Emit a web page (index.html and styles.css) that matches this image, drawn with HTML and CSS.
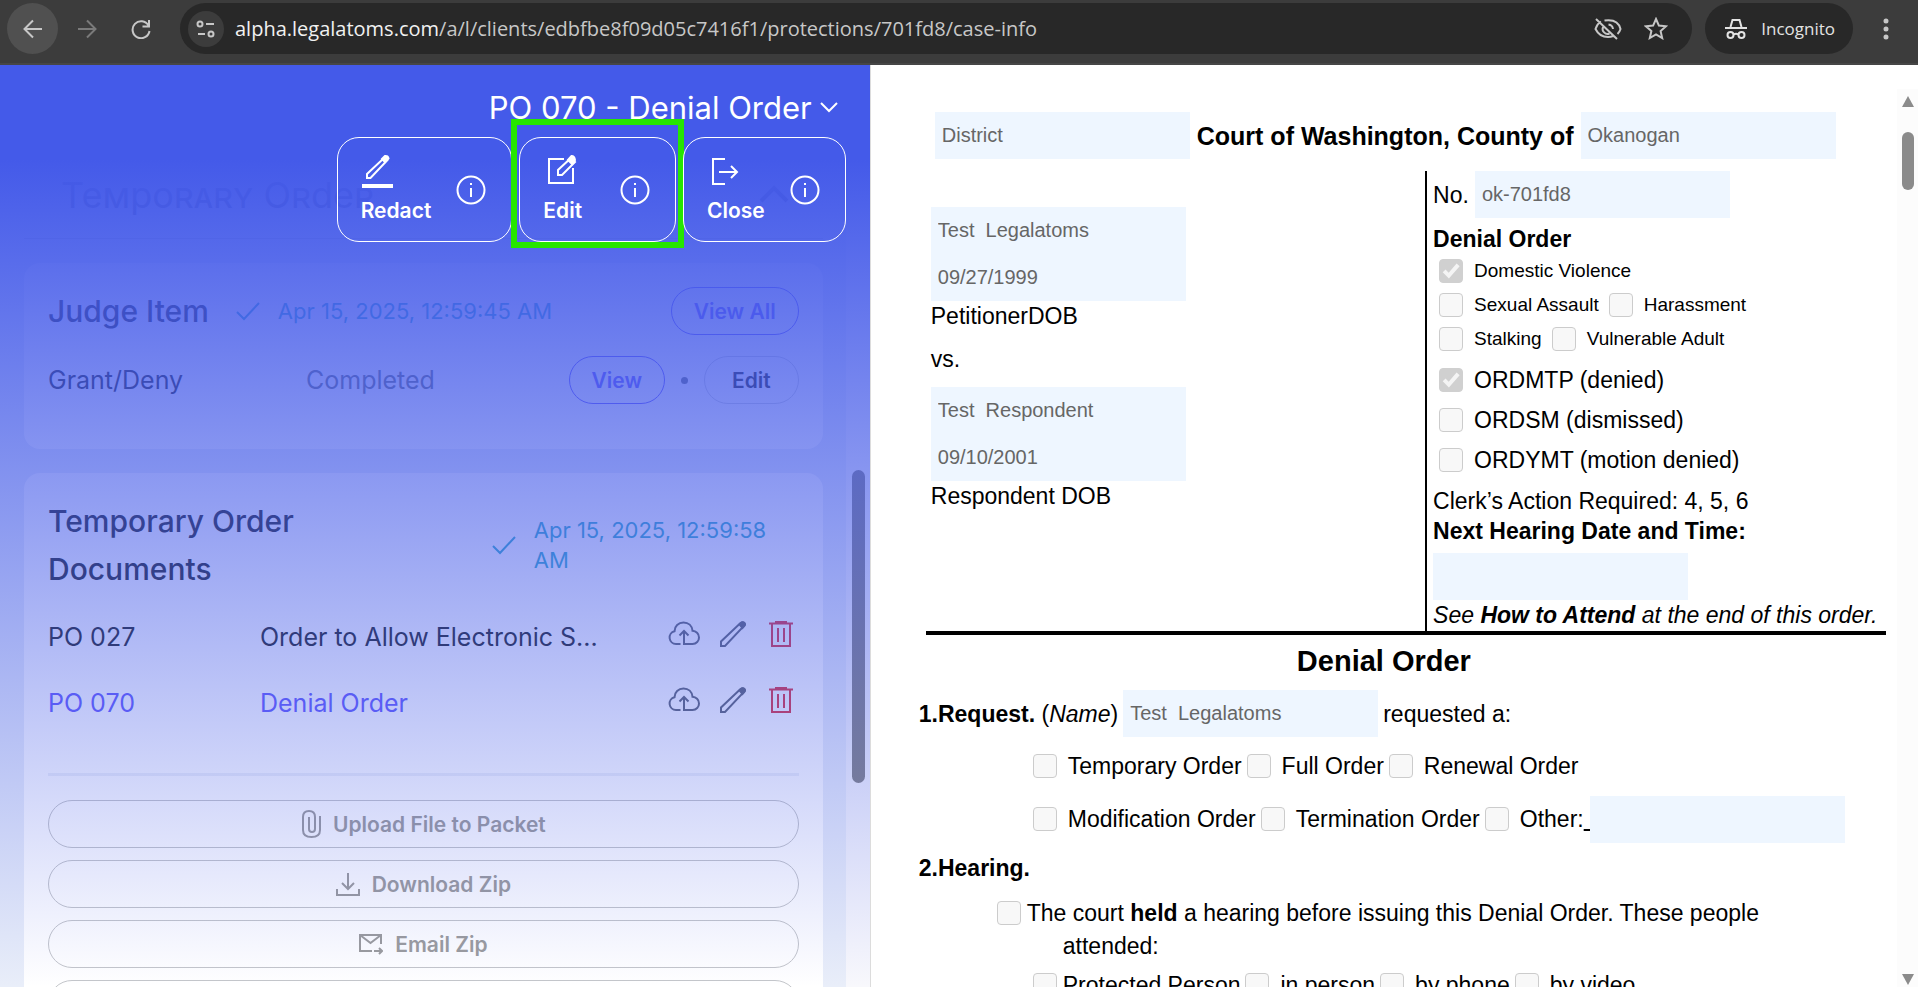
FILE: index.html
```html
<!DOCTYPE html>
<html lang="en">
<head>
  <meta charset="UTF-8" />
  <meta name="viewport" content="width=device-width, initial-scale=1.0" />
  <title>PO 070 - Denial Order</title>
  <link rel="stylesheet" href="styles.css">
</head>
<body>
  <svg class="defs" aria-hidden="true">
    <symbol id="i-check" viewBox="0 0 24 20"><path d="M1 11l7 7L23 2" /></symbol>
    <symbol id="i-info" viewBox="0 0 30 30"><circle cx="15" cy="15" r="13.5" /><path d="M15 13v9M15 8v2" /></symbol>
    <symbol id="i-cloud" viewBox="0 0 32 26"><path d="M12.500 23H8a6.500 6.500 0 0 1-1.500-12.800C6.500 5 10.500 1.500 15.500 1.500c5 0 8.500 3.300 9 8.200 3.500.2 6.500 3 6.500 6.700 0 3.600-2.600 6.600-6.500 6.600H16V10M11.500 14.500L16 10l4.500 4.500" /></symbol>
    <symbol id="i-pencil" viewBox="0 0 26 26"><path d="M1 25v-4.500L20.500 2q2-1.500 3.200 0t0 3.200L5 25z" /><path class="fill" d="M19.500 3.500L22 1.500q1.500-.5 2.500.5t.2 2.500L22.500 7z" /></symbol>
    <symbol id="i-trash" viewBox="0 0 24 26"><path d="M0 2.500h24M7 2V1h10v1M3 3v22h18V3M9 7v14M15 7v14" /></symbol>
    <symbol id="i-chevron" viewBox="0 0 18 12"><path d="M1 2l8 8 8-8" /></symbol>
  </svg>

  <header class="toolbar">
    <button class="tool round" aria-label="Back"><svg width="20" height="20" viewBox="0 0 20 20"><path d="M19 10H2M10 1.500L1.500 10l8.500 8.500" /></svg></button>
    <button class="tool dim" aria-label="Forward"><svg width="20" height="20" viewBox="0 0 20 20"><path d="M1 10h17M10 1.500l8.500 8.500-8.500 8.500" /></svg></button>
    <button class="tool" aria-label="Reload"><svg width="20" height="20" viewBox="0 0 20 20"><path d="M17.500 6.500A8.500 8.500 0 1 0 18.500 12M18 1v6.500h-6.500" /></svg></button>
    <div class="address">
      <button class="site" aria-label="Site information"><svg width="20" height="20" viewBox="0 0 20 20"><circle cx="4" cy="5" r="2.500" /><path d="M10 5h8M2 15h7" /><circle cx="15" cy="15" r="2.500" /></svg></button>
      <span class="url"><b>alpha.legalatoms.com</b>/a/l/clients/edbfbe8f09d05c7416f1/protections/701fd8/case-info</span>
      <button class="tool small" aria-label="Tracking protection"><svg width="28" height="24" viewBox="0 0 28 24"><path d="M2 2l21 20M7 4.500Q3 7 1.500 12q4 8 12.500 8 3 0 5-1M10.500 3.500Q24 1.500 26.500 12q-.8 3-3 5M9 10a5 5 0 0 0 6.500 6.500M14.500 7.500q4 .5 4.500 4.500" /></svg></button>
      <button class="tool small" aria-label="Bookmark"><svg width="24" height="23" viewBox="0 0 24 23"><path d="M12 2l2.900 6.600 7.100.7-5.400 4.800 1.600 7L12 17.400 5.800 21l1.600-7L2 9.300l7.100-.7z" /></svg></button>
    </div>
    <button class="incognito">
      <svg width="22" height="22" viewBox="0 0 22 22"><path d="M5.500 9l2-7h7l2 7M0 10h22" /><circle cx="5.500" cy="17" r="3" /><circle cx="16.500" cy="17" r="3" /><path d="M8.500 16.500q2.500-1.500 5 0" /></svg>
      Incognito
    </button>
    <button class="tool menu" aria-label="Menu"><svg width="6" height="22" viewBox="0 0 6 22"><circle class="fill" cx="3" cy="3" r="1.500" /><circle class="fill" cx="3" cy="11" r="1.500" /><circle class="fill" cx="3" cy="19" r="1.500" /></svg></button>
  </header>

  <main>
    <section class="panel">
      <div class="list">
        <div class="group-title">
          <h2>Temporary Order</h2>
          <svg class="caret" width="30" height="18" viewBox="0 0 30 18"><path d="M2 16L15 3l13 13" /></svg>
        </div>

        <div class="card">
          <div class="card-head">
            <h3>Judge Item</h3>
            <span class="stamp"><svg width="24" height="20"><use href="#i-check" /></svg>Apr 15, 2025, 12:59:45 AM</span>
            <button class="pill blue">View All</button>
          </div>
          <div class="item">
            <span class="item-name">Grant/Deny</span>
            <span class="item-status">Completed</span>
            <button class="pill blue">View</button>
            <span class="dot"></span>
            <button class="pill plain">Edit</button>
          </div>
        </div>

        <div class="card docs">
          <div class="card-head">
            <h3>Temporary Order Documents</h3>
            <span class="stamp wide"><svg width="24" height="20"><use href="#i-check" /></svg><span>Apr 15, 2025, 12:59:58 AM</span></span>
          </div>
          <div class="doc-list">
            <div class="doc-row">
              <span>PO 027</span>
              <span class="doc-name">Order to Allow Electronic S...</span>
              <button class="icon" aria-label="Upload PO 027"><svg width="32" height="26"><use href="#i-cloud" /></svg></button>
              <button class="icon" aria-label="Edit PO 027"><svg width="26" height="26"><use href="#i-pencil" /></svg></button>
              <button class="icon red" aria-label="Delete PO 027"><svg width="24" height="26"><use href="#i-trash" /></svg></button>
            </div>
            <div class="doc-row current">
              <span>PO 070</span>
              <span class="doc-name">Denial Order</span>
              <button class="icon" aria-label="Upload PO 070"><svg width="32" height="26"><use href="#i-cloud" /></svg></button>
              <button class="icon" aria-label="Edit PO 070"><svg width="26" height="26"><use href="#i-pencil" /></svg></button>
              <button class="icon red" aria-label="Delete PO 070"><svg width="24" height="26"><use href="#i-trash" /></svg></button>
            </div>
          </div>
          <hr>
          <div class="packet">
            <button class="pill gray"><svg width="20" height="28" viewBox="0 0 20 28"><path d="M19 6v14q0 7-8.500 7T2 20V7q0-6 6-6t6 6v12q0 3-3 3t-3-3V7" /></svg>Upload File to Packet</button>
            <button class="pill gray"><svg width="24" height="24" viewBox="0 0 24 24"><path d="M12 1v16M6 11l6 6 6-6M1 17v6h22v-6" /></svg>Download Zip</button>
            <button class="pill gray"><svg width="24" height="22" viewBox="0 0 24 22"><path d="M22 11V2H1v16h12M1 2l10.500 8L22 2M15 18h8M20 15l3 3-3 3" /></svg>Email Zip</button>
            <button class="pill gray" aria-label="More"></button>
          </div>
        </div>
      </div>
      <div class="track" aria-hidden="true"><div class="thumb"></div></div>

      <div class="overlay">
        <button class="doc-title">PO 070 - Denial Order <svg width="18" height="12"><use href="#i-chevron" /></svg></button>
        <div class="actions">
          <div class="action redact">
            <button><svg width="32" height="34" viewBox="0 0 32 34"><path d="M6 24v-4L23 4q2.500-1.500 3.500 2L9.500 24z" /><path class="fill" d="M21 5l3-3q3-.5 3.500 2.500L24 8z" /><path class="bar-line" d="M1 32h31" /></svg>Redact</button>
            <button class="info" aria-label="About Redact"><svg width="30" height="30"><use href="#i-info" /></svg></button>
          </div>
          <div class="action edit">
            <button><svg width="34" height="34" viewBox="0 0 34 34"><path d="M21 5H6v24h24V14" /><path d="M15 21v-5L28 4l4 4-13 13z" /><path class="fill" d="M25 6l3.500-4q3 0 3.500 4l-3 4z" /></svg>Edit</button>
            <button class="info" aria-label="About Edit"><svg width="30" height="30"><use href="#i-info" /></svg></button>
          </div>
          <div class="action close">
            <button><svg width="32" height="34" viewBox="0 0 32 34"><path d="M18 5H6v25h12M12 18h18M24 12l6 6-6 6" /></svg>Close</button>
            <button class="info" aria-label="About Close"><svg width="30" height="30"><use href="#i-info" /></svg></button>
          </div>
        </div>
      </div>
    </section>

    <section class="document">
      <form class="paper">
        <div class="line court">
          <input type="text" class="field" aria-label="Court type" value="District" disabled>
          <b>Court of Washington, County of</b>
          <input type="text" class="field" aria-label="County" value="Okanogan" disabled>
        </div>

        <div class="caption">
          <div class="parties">
            <input type="text" class="field" id="petitioner" value="Test  Legalatoms" disabled>
            <input type="text" class="field" id="petitionerDob" aria-label="Petitioner date of birth" value="09/27/1999" disabled>
            <label for="petitioner">PetitionerDOB</label>
            <p>vs.</p>
            <input type="text" class="field" id="respondent" value="Test  Respondent" disabled>
            <input type="text" class="field" id="respondentDob" aria-label="Respondent date of birth" value="09/10/2001" disabled>
            <label for="respondent">Respondent DOB</label>
          </div>
          <div class="case">
            <div class="number"><label for="caseNo">No.</label><input type="text" class="field" id="caseNo" value="ok-701fd8" disabled></div>
            <p class="case-title"><b>Denial Order</b></p>
            <div class="types">
              <div><label><input type="checkbox" checked disabled>Domestic Violence</label></div>
              <div><label><input type="checkbox" disabled>Sexual Assault</label><label><input type="checkbox" disabled>Harassment</label></div>
              <div><label><input type="checkbox" disabled>Stalking</label><label><input type="checkbox" disabled>Vulnerable Adult</label></div>
            </div>
            <div class="codes">
              <label><input type="checkbox" checked disabled>ORDMTP (denied)</label>
              <label><input type="checkbox" disabled>ORDSM (dismissed)</label>
              <label><input type="checkbox" disabled>ORDYMT (motion denied)</label>
            </div>
            <p>Clerk’s Action Required: 4, 5, 6</p>
            <label for="nextHearing"><b>Next Hearing Date and Time:</b></label>
            <input type="text" class="field next" id="nextHearing" disabled>
            <p><i>See <b>How to Attend</b> at the end of this order.</i></p>
          </div>
        </div>

        <h1>Denial Order</h1>

        <div class="line request">
          <label for="requestName"><b>1.Request.</b> (<i>Name</i>)</label>
          <input type="text" class="field" id="requestName" value="Test  Legalatoms" disabled>
          <span>requested a:</span>
        </div>
        <div class="line options">
          <label><input type="checkbox" disabled>Temporary Order</label>
          <label><input type="checkbox" disabled>Full Order</label>
          <label><input type="checkbox" disabled>Renewal Order</label>
        </div>
        <div class="line options other">
          <label><input type="checkbox" disabled>Modification Order</label>
          <label><input type="checkbox" disabled>Termination Order</label>
          <label><input type="checkbox" disabled><span>Other:<u>&nbsp;</u></span></label>
          <input type="text" class="field" aria-label="Other order" disabled>
        </div>

        <h2 class="section-title">2.Hearing.</h2>
        <div class="held">
          <input type="checkbox" id="held" disabled>
          <label for="held">The court <b>held</b> a hearing before issuing this Denial Order. These people</label>
        </div>
        <p class="attended">attended:</p>
        <div class="line options people">
          <label class="tight"><input type="checkbox" disabled>Protected Person</label>
          <label><input type="checkbox" disabled>in person</label>
          <label><input type="checkbox" disabled>by phone</label>
          <label><input type="checkbox" disabled>by video</label>
        </div>
      </form>
      <div class="scrollbar" aria-hidden="true">
        <span class="up"></span>
        <span class="bar"></span>
        <span class="down"></span>
      </div>
    </section>
  </main>
</body>
</html>
```
FILE: styles.css
```css
* {
  box-sizing: border-box;
}
body {
  margin: 0;
  height: 100vh;
  display: flex;
  flex-direction: column;
  overflow: hidden;
  font-family: Inter, sans-serif;
  color: #212529;
}
h1, h2, h3, p {
  margin: 0;
}
button {
  padding: 0;
  border: none;
  background: none;
  font: inherit;
  color: inherit;
  cursor: pointer;
}
svg {
  flex: none;
  fill: none;
  stroke: currentColor;
  stroke-width: 2;
}
.fill {
  fill: currentColor;
}
.defs {
  display: none;
}

/* browser bar */
.toolbar {
  flex: none;
  height: 65px;
  display: flex;
  align-items: center;
  padding: 0 7px 6px;
  background: #3c3c3c;
  border-bottom: 2px solid #464646;
  color: #c7c7c7;
  font-family: "Open Sans", sans-serif;
}
.tool {
  width: 51px;
  height: 51px;
  margin-right: 3px;
  display: flex;
  align-items: center;
  justify-content: center;
  border-radius: 50%;
}
.round {
  background: #505050;
}
.dim {
  color: #7a7a7a;
}
.address {
  flex: 1;
  height: 51px;
  margin-left: 11px;
  padding: 0 12px 0 8px;
  display: flex;
  align-items: center;
  border-radius: 26px;
  background: #282828;
}
.site {
  width: 36px;
  height: 36px;
  display: flex;
  align-items: center;
  justify-content: center;
  border-radius: 50%;
  background: #3c3c3c;
}
.url {
  flex: 1;
  margin-left: 11px;
  font-size: 20px;
}
.url b {
  font-weight: 400;
  color: #f1f1f1;
}
.small {
  width: 48px;
  margin-right: 0;
}
.incognito {
  height: 51px;
  margin-left: 13px;
  padding: 0 18px 0 20px;
  display: flex;
  align-items: center;
  gap: 14px;
  border-radius: 26px;
  background: #282828;
  color: #e3e3e3;
  font-size: 17px;
}
.menu {
  margin: 0 0 0 7px;
}

main {
  flex: 1;
  min-height: 0;
  display: flex;
}

/* left panel */
.panel {
  flex: 0 0 45.4%;
  position: relative;
  display: flex;
  overflow: hidden;
  background: #e9eef9;
  border-right: 1px solid #dcdcdc;
}
.list {
  flex: 1;
  padding: 0 23px 0 24px;
}
.group-title {
  height: 174px;
  padding: 94px 34px 0 37px;
  display: flex;
  align-items: flex-start;
  justify-content: space-between;
  border-bottom: 1px solid #c2c8d4;
  color: #5b6488;
}
.group-title h2 {
  font-size: 36px;
  line-height: 72px;
  font-weight: 400;
  font-variant: small-caps;
}
.caret {
  margin-top: 26px;
  stroke-width: 4;
}
.card {
  margin-top: 24px;
  padding: 24px 24px 45px;
  border-radius: 16px;
  background: #ffffff;
}
.card-head {
  display: flex;
  align-items: center;
}
.card-head h3 {
  font-size: 30px;
  line-height: 48px;
  font-weight: 500;
}
.stamp {
  flex: 1;
  margin-left: 27px;
  display: flex;
  align-items: center;
  gap: 18px;
  font-size: 22px;
  line-height: 30px;
  color: #37acca;
}
.pill {
  height: 48px;
  padding: 0 22px;
  display: flex;
  align-items: center;
  justify-content: center;
  border: 1px solid #6a5ffb;
  border-radius: 24px;
  font-size: 21px;
  font-weight: 600;
}
.blue {
  color: #6a5ffb;
}
.plain {
  padding: 0 27px;
  border-color: #cfd3da;
}
.item {
  margin-top: 21px;
  display: flex;
  align-items: center;
  font-size: 25px;
}
.item-name {
  width: 258px;
}
.item-status {
  flex: 1;
  color: #6c757d;
}
.dot {
  width: 7px;
  height: 7px;
  margin: 0 16px;
  border-radius: 50%;
  background: #6c757d;
}
.docs h3 {
  width: 300px;
}
.docs .stamp {
  flex: none;
  width: 283px;
  margin-left: auto;
  margin-right: 24px;
}
.doc-list {
  padding-top: 11px;
}
.doc-row {
  height: 66px;
  display: flex;
  align-items: center;
  font-size: 25px;
}
.doc-row > span:first-child {
  width: 212px;
}
.doc-row .doc-name {
  flex: 1;
}
.current > span {
  color: #655dfb;
}
.icon {
  height: 32px;
  margin-left: 20px;
  display: flex;
  align-items: flex-start;
  color: #5f6675;
}
.red {
  margin: 0 6px 0 23px;
  color: #dc3545;
}
hr {
  height: 3px;
  margin: 37px 0 24px;
  border: none;
  background: #eef1f8;
}
.packet {
  display: flex;
  flex-direction: column;
  gap: 12px;
}
.gray {
  flex: none;
  gap: 12px;
  border-color: #c4c6ca;
  color: #9c9c9c;
}
.track {
  width: 24px;
  padding: 405px 5px 0 6px;
  background: #f8f8fc;
}
.thumb {
  height: 313px;
  border-radius: 7px;
  background: #858585;
}

/* fades the list out under the document actions */
.overlay {
  position: absolute;
  inset: 0;
  padding: 18px 24px 0;
  display: flex;
  flex-direction: column;
  align-items: flex-end;
  background: linear-gradient(#445ae9 95px, rgba(68, 90, 233, 0) 100%);
  color: #ffffff;
}
.doc-title {
  height: 48px;
  margin-right: 8px;
  display: flex;
  align-items: center;
  gap: 8px;
  font-size: 31px;
}
.actions {
  margin-top: 6px;
  display: flex;
  gap: 7px;
}
.action {
  position: relative;
  height: 105px;
  padding: 16px 25px 0 23px;
  display: flex;
  align-items: flex-start;
  gap: 25px;
  border: 1px solid #ffffff;
  border-radius: 22px;
  font-size: 21px;
  font-weight: 600;
}
.action button {
  display: flex;
  flex-direction: column;
  gap: 10px;
}
.action .info {
  padding-top: 21px;
}
.bar-line {
  stroke-width: 4;
}
.edit {
  gap: 38px;
}
.edit::after {
  content: "";
  position: absolute;
  inset: -19px -9px -7px;
  border: 6px solid #26e600;
}

/* court form */
.document {
  flex: 1;
  min-width: 0;
  display: flex;
  background: #ffffff;
}
.paper {
  flex: 1;
  min-width: 0;
  padding-top: 47px;
  overflow: hidden;
  font-family: "Liberation Sans", Arial, sans-serif;
  font-size: 23px;
  line-height: 30px;
  color: #000000;
}
.field {
  width: 255px;
  height: 47px;
  padding: 0 7px;
  display: block;
  flex: none;
  border: none;
  border-radius: 0;
  background: #eef6ff;
  color: #666666;
  font: 20px "Liberation Sans", Arial, sans-serif;
}
input[type="checkbox"] {
  appearance: none;
  flex: none;
  width: 24px;
  height: 24px;
  margin: 0;
  border: 1px solid #cccccc;
  border-radius: 4px;
  background: #f8f8f8;
}
input[type="checkbox"]:checked {
  border-color: #d0d0d0;
  background: #d0d0d0;
}
input[type="checkbox"]:checked::after {
  content: "";
  display: block;
  height: 22px;
  background: #f4f4f4;
  clip-path: polygon(12% 56%, 25% 43%, 39% 58%, 75% 16%, 89% 28%, 40% 84%);
}
.line {
  display: flex;
  align-items: center;
  white-space: nowrap;
}
.court {
  padding-left: 64px;
  gap: 7px;
  font-size: 25px;
}
.caption {
  margin: 12px 11px 0 55px;
  display: grid;
  grid-template-columns: 52% 48%;
  border-bottom: 4px solid #000000;
}
.parties {
  padding: 36px 5px 0;
}
.parties label {
  display: block;
}
.parties p {
  margin: 13px 0;
}
.case {
  padding: 0 0 1px 6px;
  border-left: 2px solid #000000;
}
.number {
  display: flex;
  align-items: center;
  gap: 6px;
}
.case-title {
  margin-top: 6px;
}
.types {
  padding-left: 6px;
  font-size: 19px;
}
.types div {
  height: 34px;
  display: flex;
  align-items: center;
  gap: 10px;
}
.types label, .codes label, .options label {
  display: flex;
  align-items: center;
  gap: 11px;
}
.codes {
  padding: 4px 0 6px 6px;
}
.codes label {
  height: 40px;
}
.next {
  margin-top: 7px;
}
h1 {
  font-size: 29px;
  line-height: 52px;
  text-align: center;
}
.request {
  margin-top: 3px;
  padding-left: 48px;
  gap: 5px;
}
.options {
  height: 58px;
  padding-left: 162px;
  gap: 5px;
}
.other {
  height: 48px;
}
.other label:nth-child(3) {
  margin-right: -5px;
}
.section-title {
  padding-left: 48px;
  font-size: 23px;
  line-height: 50px;
}
.held {
  height: 40px;
  padding-left: 126px;
  display: flex;
  align-items: center;
  gap: 6px;
}
.attended {
  padding-left: 192px;
  line-height: 26px;
}
.people {
  height: 52px;
}
.options .tight {
  gap: 6px;
}
.scrollbar {
  width: 21px;
  margin-top: 24px;
  padding: 7px 4px 2px 5px;
  display: flex;
  flex-direction: column;
  background: #fcfcfc;
}
.up, .down {
  height: 11px;
  background: #8b8b8b;
  clip-path: polygon(50% 0, 100% 100%, 0 100%);
}
.down {
  margin-top: auto;
  clip-path: polygon(0 0, 100% 0, 50% 100%);
}
.bar {
  height: 58px;
  margin-top: 25px;
  border-radius: 6px;
  background: #8b8b8b;
}
```
